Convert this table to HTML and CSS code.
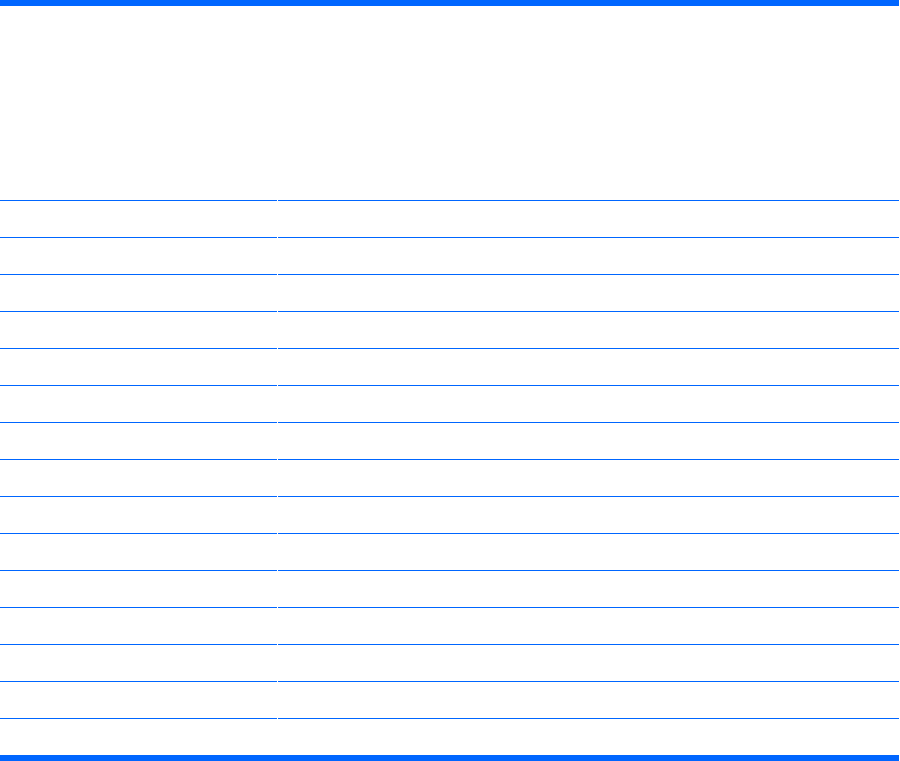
FILE: index.html
```html
<!DOCTYPE html>
<html lang="en">
<head>
<meta charset="UTF-8">
<meta name="viewport" content="width=device-width, initial-scale=1.0">
<title>Table</title>
<link rel="stylesheet" href="styles.css">
</head>
<body>
<div class="sheet">
  <div class="row head">
    <div class="cell"></div>
    <div class="cell"></div>
  </div>
  <div class="row"><div class="cell"></div><div class="cell"></div></div>
  <div class="row"><div class="cell"></div><div class="cell"></div></div>
  <div class="row"><div class="cell"></div><div class="cell"></div></div>
  <div class="row"><div class="cell"></div><div class="cell"></div></div>
  <div class="row"><div class="cell"></div><div class="cell"></div></div>
  <div class="row"><div class="cell"></div><div class="cell"></div></div>
  <div class="row"><div class="cell"></div><div class="cell"></div></div>
  <div class="row"><div class="cell"></div><div class="cell"></div></div>
  <div class="row"><div class="cell"></div><div class="cell"></div></div>
  <div class="row"><div class="cell"></div><div class="cell"></div></div>
  <div class="row"><div class="cell"></div><div class="cell"></div></div>
  <div class="row"><div class="cell"></div><div class="cell"></div></div>
  <div class="row"><div class="cell"></div><div class="cell"></div></div>
  <div class="row"><div class="cell"></div><div class="cell"></div></div>
  <div class="row"><div class="cell"></div><div class="cell"></div></div>
</div>
</body>
</html>
```
FILE: styles.css
```css
body {
  margin: 0;
  padding: 0;
  background-color: #ffffff;
  font-family: 'Liberation Sans', Arial, sans-serif;
  color: #000;
}

.sheet {
  width: 899px;
  border-top: 6px solid #0066ff;
  border-bottom: 6px solid #0066ff;
}

.row {
  display: grid;
  grid-template-columns: 277px 1fr;
  column-gap: 1px;
  height: 37px;
}

.row.head {
  height: 194px;
}

.row .cell {
  border-top: 1px solid #0066ff;
}

.row.head .cell {
  border-top: none;
}
```
